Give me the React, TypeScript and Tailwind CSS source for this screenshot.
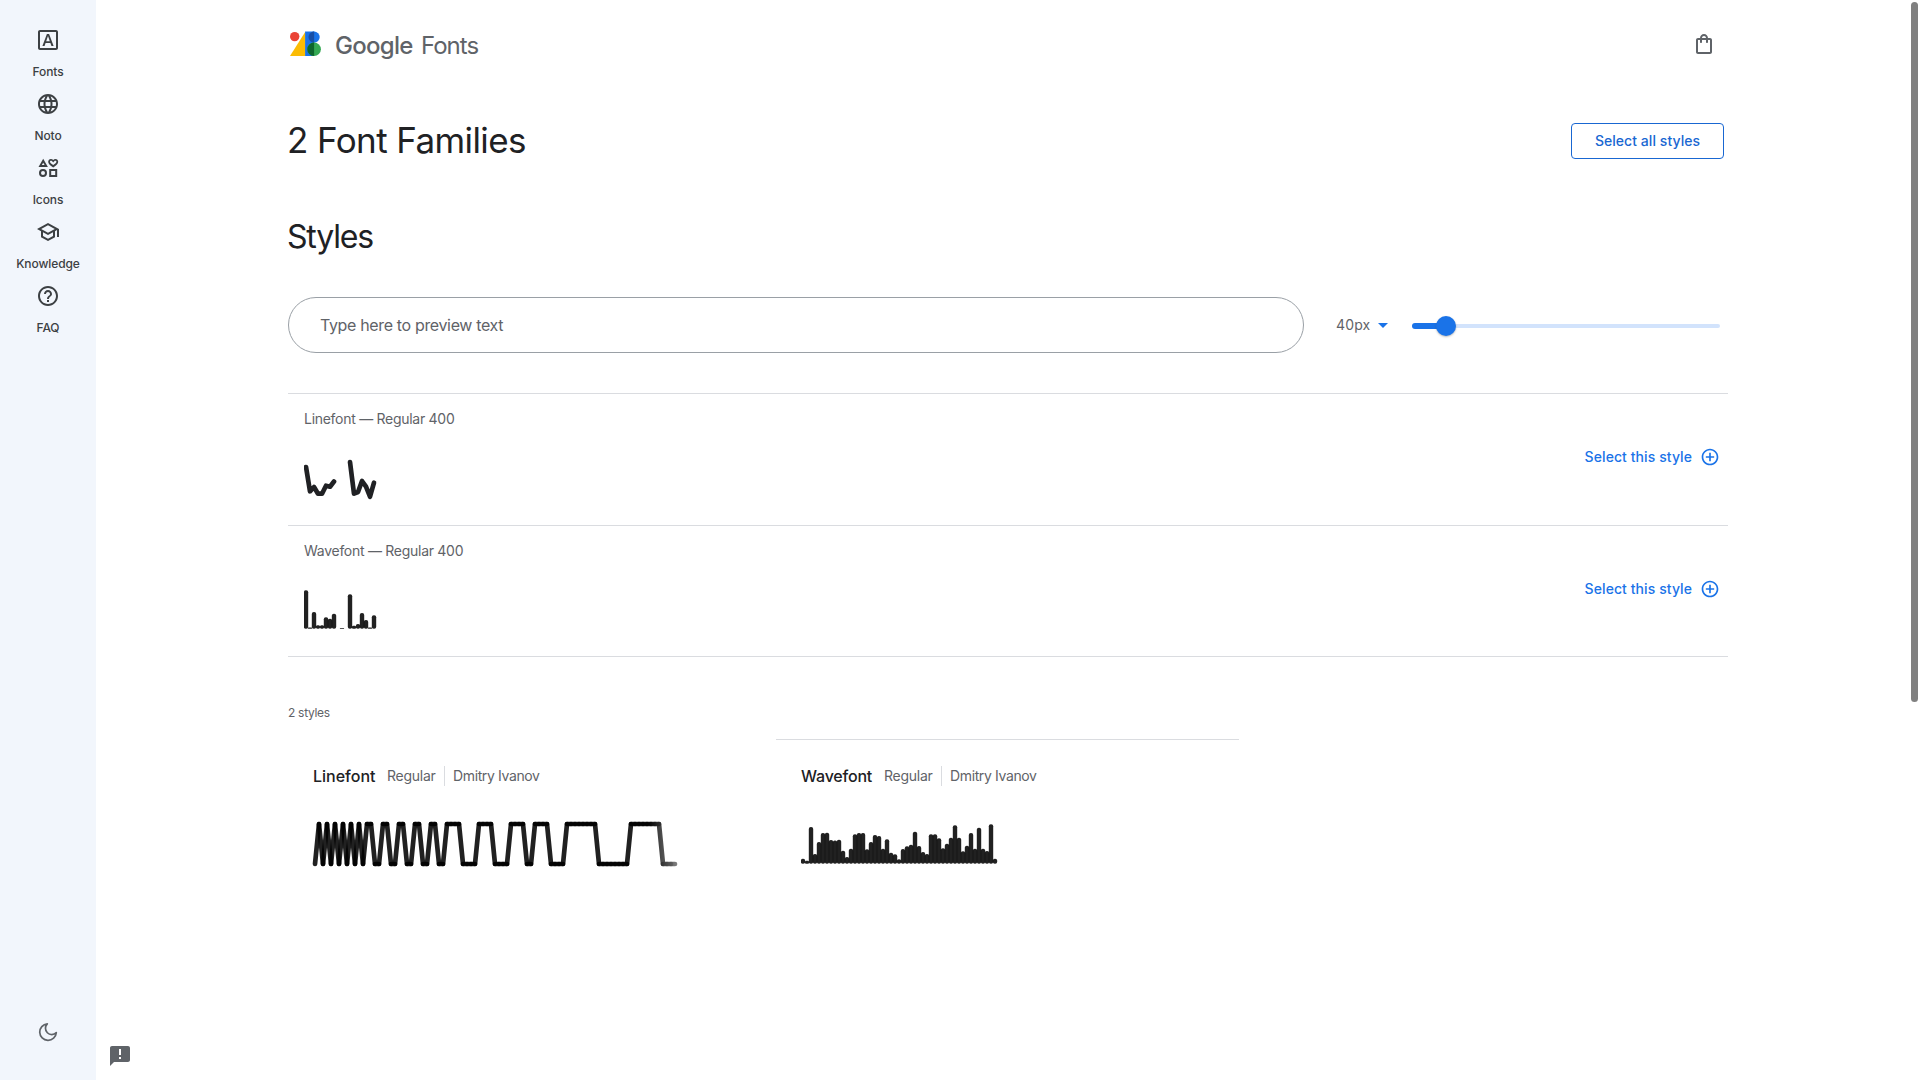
import React from "react";

const ink = "#202124";

function Icon({ d, size = 24, color = "#3c4043" }: { d: string; size?: number; color?: string }) {
  return (
    <svg width={size} height={size} viewBox="0 0 24 24" fill={color} className="block shrink-0">
      <path d={d} fillRule="evenodd" />
    </svg>
  );
}

const NAV = [
  {
    label: "Fonts",
    d: "M4 2h16c1.1 0 2 .9 2 2v16c0 1.1-.9 2-2 2H4c-1.1 0-2-.9-2-2V4c0-1.100.9-2 2-2zm0 2v16h16V4H4zM10.900 6h2.200l4.500 12h-2.150l-1.050-3h-4.800l-1.050 3H6.400L10.900 6zm-.7 7.200h3.600L12 8.100z",
  },
  {
    label: "Noto",
    d: "M11.99 2C6.47 2 2 6.48 2 12s4.470 10 9.990 10C17.520 22 22 17.520 22 12S17.520 2 11.990 2zm6.930 6h-2.950c-.32-1.250-.78-2.450-1.380-3.560 1.840.63 3.370 1.910 4.330 3.560zM12 4.040c.83 1.200 1.480 2.530 1.910 3.960h-3.820c.43-1.430 1.080-2.760 1.910-3.960zM4.260 14C4.100 13.360 4 12.690 4 12s.1-1.360.26-2h3.380c-.08.66-.14 1.320-.14 2s.06 1.340.14 2H4.260zm.82 2h2.950c.32 1.250.78 2.450 1.380 3.560-1.840-.63-3.370-1.900-4.330-3.560zm2.950-8H5.080c.96-1.660 2.490-2.930 4.330-3.560C8.810 5.550 8.350 6.750 8.030 8zM12 19.960c-.83-1.200-1.480-2.530-1.910-3.960h3.820c-.43 1.430-1.080 2.760-1.910 3.960zM14.340 14H9.660c-.09-.66-.16-1.320-.16-2s.07-1.350.16-2h4.680c.09.65.16 1.320.16 2s-.07 1.340-.16 2zm.25 5.560c.6-1.110 1.060-2.310 1.380-3.560h2.950c-.96 1.650-2.490 2.930-4.330 3.560zM16.360 14c.08-.66.14-1.320.14-2s-.06-1.340-.14-2h3.380c.16.64.26 1.310.26 2s-.1 1.360-.26 2h-3.380z",
  },
  {
    label: "Icons",
    d: "M7.200 2.800L2.500 11h9.400zm0 3.900L8.600 9.100H5.800zM3 17a4 4 0 1 0 8 0 4 4 0 1 0-8 0zm2 0a2 2 0 1 1 4 0 2 2 0 1 1-4 0zM13.200 13h8v8h-8zm2 2v4h4v-4zM17.200 11.600l-1.100-.9C13.600 8.800 12.200 7.600 12.200 5.700c0-1.600 1.200-2.800 2.700-2.800.9 0 1.700.4 2.300 1 .6-.6 1.400-1 2.300-1 1.500 0 2.700 1.200 2.700 2.800 0 1.900-1.400 3.100-3.900 5zm0-2.500c2.100-1.600 3.200-2.400 3.200-3.400 0-.6-.4-1-1-1-.8 0-1.400.7-2.200 1.700-.8-1-1.400-1.700-2.200-1.700-.6 0-1 .4-1 1 0 1 1.100 1.800 3.200 3.400z",
  },
  {
    label: "Knowledge",
    d: "M12 3L1 9l4 2.180v6L12 21l7-3.820v-6l2-1.090V17h2V9L12 3zm6.820 6L12 12.720 5.180 9 12 5.280 18.820 9zM17 15.990l-5 2.730-5-2.730v-3.720L12 15l5-2.730v3.720z",
  },
  {
    label: "FAQ",
    d: "M11 18h2v-2h-2v2zm1-16C6.480 2 2 6.480 2 12s4.480 10 10 10 10-4.480 10-10S17.520 2 12 2zm0 18c-4.410 0-8-3.590-8-8s3.590-8 8-8 8 3.590 8 8-3.590 8-8 8zm0-14c-2.210 0-4 1.790-4 4h2c0-1.100.9-2 2-2s2 .9 2 2c0 2-3 1.750-3 5h2c0-2.250 3-2.500 3-5 0-2.210-1.790-4-4-4z",
  },
];

function Sidebar() {
  return (
    <nav className="flex h-full w-24 shrink-0 flex-col items-center justify-between bg-[#f2f6fc] pt-7">
      <ul className="flex flex-col">
        {NAV.map((n) => (
          <li key={n.label} className="flex h-16 w-24 flex-col items-center">
            <Icon d={n.d} />
            <span className="mt-[11px] text-[12px] leading-[18px] font-medium tracking-[-0.1px] text-[#3c4043]">{n.label}</span>
          </li>
        ))}
      </ul>
      <svg width="24" height="24" viewBox="0 0 24 24" fill="none" stroke="#5f6368" strokeWidth="1.700" strokeLinejoin="round" className="mb-9">
        <path d="M11.300 3.800a8.300 8.300 0 1 0 9 8.900 5.600 5.600 0 0 1-9-8.900z" />
      </svg>
    </nav>
  );
}

function Logo() {
  return (
    <div className="flex items-center">
      <svg width="32" height="26" viewBox="0 0 32 26" className="ml-[2px] block">
        <path d="M15.500 .5v24.500H0z" fill="#fbbc04" />
        <circle cx="4.700" cy="5.600" r="4.700" fill="#ea4335" />
        <path d="M15.100 .5h9v24.500h-9z" fill="#1a73e8" />
        <circle cx="24.100" cy="6.100" r="5.600" fill="#1a73e8" />
        <path d="M24.100 .5a5.600 5.600 0 0 0 0 11.200z" fill="#174ea6" />
        <circle cx="24.100" cy="18.200" r="6.800" fill="#34a853" />
        <path d="M24.100 11.400a6.800 6.800 0 0 0 0 13.600z" fill="#0d652d" />
      </svg>
      <div className="mt-[3px] ml-[13px] flex text-[24px] leading-8 text-[#5f6368]">
        <span className="w-[86px] font-medium tracking-[-0.7px]">Google</span>
        <span className="tracking-[-1px]">Fonts</span>
      </div>
    </div>
  );
}

function StyleRow({ name, children }: { name: string; children: React.ReactNode }) {
  return (
    <div className="flex h-[132px] items-center justify-between border-t border-[#dadce0] last:h-[131px]">
      <div className="flex h-full flex-col pt-[15px] pl-4">
        <span className="text-[14px] leading-5 tracking-[-0.28px] text-[#5f6368]">{name}</span>
        <svg width="80" height="50" viewBox="0 0 80 50" className="mt-[25px] block">
          {children}
        </svg>
      </div>
      <button className="mt-[-5px] flex items-center gap-2 pr-2 text-[14px] leading-5 font-medium text-[#1a73e8]">
        <span className="tracking-[0.08px]">Select this style</span>
        <Icon size={20} color="#1a73e8" d="M13 7h-2v4H7v2h4v4h2v-4h4v-2h-4V7zm-1-5C6.480 2 2 6.480 2 12s4.480 10 10 10 10-4.480 10-10S17.520 2 12 2zm0 18c-4.410 0-8-3.590-8-8s3.590-8 8-8 8 3.590 8 8-3.590 8-8 8z" />
      </button>
    </div>
  );
}

// Each entry is [centre x, top y] of a rounded bar standing on a shared baseline.
function Bars({ bars, base }: { bars: number[][]; base: number }) {
  return (
    <g fill="#000" fillOpacity="0.87">
      {bars.map(([x, y]) => (
        <rect key={x} x={x - 2.200} y={y} width={4.400} height={base - y} rx={Math.min(2, (base - y) / 2)} />
      ))}
    </g>
  );
}

const WAVEFONT_SAMPLE = [
  [2, 4.300], [6, 41.500], [10, 26], [14, 39.300], [18, 39.300], [22, 31.300], [26, 32.700], [30, 27.700], [38, 41.900],
  [46, 8.300], [50, 39.700], [54, 38], [58, 27], [62, 34], [66, 41.500], [70, 29.300],
];

const WAVE_TOPS = [
  34.700, 36.700, 3, 30, 18, 9, 8.700, 16, 16.500, 15.700, 26.700, 33, 24.700, 10.300, 9, 9, 25.300, 18, 11, 12, 24.700, 15.300, 28.700,
  30.300, 35.300, 25, 22.300, 20.700, 7.700, 22, 28, 30, 10.300, 10.300, 14.300, 24.300, 19.700, 13.700, 1.300, 13.700, 27.300, 21.700, 9, 24.700,
  3.700, 24.700, 27, 0.300, 34.700,
];

// One level per 4px step: 1 is high, 0 is low.
const LINE_LEVELS =
  "0101010101010" + "110011001100110011001111" + "0000111100001111" + "001111" + "0000" + "11111111" + "00000000" + "11111111" + "0000";

function LineWave() {
  const levels = LINE_LEVELS.split("");
  const point = (i: number) => [2 + i * 4, levels[i] === "1" ? 2 : 42];
  return (
    <svg width="370" height="46" viewBox="0 0 370 46" className="mt-[34px] block overflow-visible">
      <defs>
        <linearGradient id="fade" gradientUnits="userSpaceOnUse" x1="336" y1="0" x2="366" y2="0">
          <stop offset="0" stopColor="#fff" />
          <stop offset="1" stopColor="#8c8c8c" />
        </linearGradient>
        <mask id="fadeMask" maskUnits="userSpaceOnUse" x="-2" y="-2" width="374" height="50">
          <rect x="-2" y="-2" width="374" height="50" fill="url(#fade)" />
        </mask>
      </defs>
      <g mask="url(#fadeMask)" stroke="#000" strokeOpacity="0.87" strokeWidth="4.700" strokeLinecap="round">
        {levels.slice(1).map((_, i) => {
          const [x1, y1] = point(i);
          const [x2, y2] = point(i + 1);
          return <line key={i} x1={x1} y1={y1} x2={x2} y2={y2} />;
        })}
      </g>
    </svg>
  );
}

function CardHeading({ name, nameClass }: { name: string; nameClass: string }) {
  return (
    <div className="flex items-center">
      <span className={`text-[16px] leading-6 font-medium text-[#202124] ${nameClass}`}>{name}</span>
      <span className="w-[58px] border-r border-[#dadce0] text-[14px] leading-5 tracking-[-0.25px] text-[#5f6368]">Regular</span>
      <span className="ml-2 text-[14px] leading-5 tracking-[-0.37px] text-[#5f6368]">Dmitry Ivanov</span>
    </div>
  );
}

export default function App() {
  return (
    <div className="relative flex h-[1080px] w-[1920px] overflow-hidden bg-white font-['Inter',sans-serif] text-[#202124]">
      <Sidebar />
      <main className="ml-48 w-[1440px]">
        <header className="flex h-[88px] items-center justify-between pr-3">
          <Logo />
          <Icon color="#5f6368" d="M18 6h-2c0-2.210-1.790-4-4-4S8 3.790 8 6H6c-1.100 0-2 .9-2 2v12c0 1.100.9 2 2 2h12c1.100 0 2-.9 2-2V8c0-1.100-.9-2-2-2zm-6-2c1.100 0 2 .9 2 2h-4c0-1.100.9-2 2-2zm6 16H6V8h2v2c0 .55.45 1 1 1s1-.45 1-1V8h4v2c0 .55.45 1 1 1s1-.45 1-1V8h2v12z" />
        </header>
        <div className="mt-[31px] flex h-11 items-center justify-between pr-1">
          <h1 className="mb-[2px] -ml-px text-[35px] leading-[44px] tracking-[-0.6px]">2 Font Families</h1>
          <button className="h-9 w-[153px] rounded border border-[#1967d2] text-[14px] leading-5 font-medium tracking-[0.05px] text-[#1967d2]">Select all styles</button>
        </div>
        <h2 className="mt-[54px] -ml-px text-[32px] leading-10 tracking-[-1.2px]">Styles</h2>
        <div className="mt-10 flex h-14 items-center">
          <div className="flex h-14 w-[1016px] items-center rounded-full border border-[#9aa0a6] pl-[31px] text-[16px] leading-6 text-[#5f6368]">
            <span className="tracking-[-0.35px]">Type here to preview text</span>
          </div>
          <span className="ml-8 w-[42px] text-[14px] leading-5 tracking-[0.15px] text-[#5f6368]">40px</span>
          <svg width="10" height="5" viewBox="0 0 10 5" className="block"><path d="M0 0h10L5 5z" fill="#1a73e8" /></svg>
          <div className="relative mt-[2px] ml-6 flex h-5 w-[308px] items-center">
            <div className="h-[6px] w-[34px] rounded-l-full bg-[#1a73e8]" />
            <div className="h-1 w-[274px] rounded-r-full bg-[#d2e3fc]" />
            <div className="absolute top-0 left-6 size-5 rounded-full bg-[#1a73e8] shadow-[0_1px_2px_rgba(60,64,67,0.35)]" />
          </div>
        </div>
        <section className="mt-10 border-b border-[#dadce0]">
          <StyleRow name="Linefont — Regular 400">
            <g fill="none" stroke={ink} strokeWidth="4.700" strokeLinecap="round" strokeLinejoin="round">
              <path d="M2 13L6 37.300L10 33L14 39.700H18L22 31.700L26 32.700L30 27.500" />
              <path d="M46 8L50 39.700L54 38L58 27L62 32.700L66 42.700L70 28.700" />
            </g>
          </StyleRow>
          <StyleRow name="Wavefont — Regular 400">
            <Bars base={42.700} bars={WAVEFONT_SAMPLE} />
          </StyleRow>
        </section>
        <p className="mt-[46px] text-[12px] leading-5 tracking-[-0.3px] text-[#5f6368]">2 styles</p>
        <div className="mt-[16px] flex gap-[25px]">
          <article className="h-[150px] w-[463px] border-t border-transparent pt-6 pl-[25px]">
            <CardHeading name="Linefont" nameClass="w-[74px]" />
            <LineWave />
          </article>
          <article className="h-[150px] w-[463px] border-t border-[#dadce0] pt-6 pl-[25px]">
            <CardHeading name="Wavefont" nameClass="w-[83px] tracking-[-0.2px]" />
            <svg width="200" height="44" viewBox="0 0 200 44" className="mt-9 block">
              <Bars base={39.700} bars={WAVE_TOPS.map((y, i) => [2 + i * 4, y])} />
            </svg>
          </article>
        </div>
      </main>
      <button className="absolute bottom-3 left-[108px]">
        <Icon color="#5f6368" d="M20 2H4c-1.100 0-2 .9-2 2v18l4-4h14c1.100 0 2-.9 2-2V4c0-1.100-.9-2-2-2zm-7 13h-2v-2h2v2zm0-4h-2V5h2v6z" />
      </button>
      <div className="absolute top-[2px] right-[2px] h-[700px] w-[7px] rounded-full bg-[#808080]" />
    </div>
  );
}
